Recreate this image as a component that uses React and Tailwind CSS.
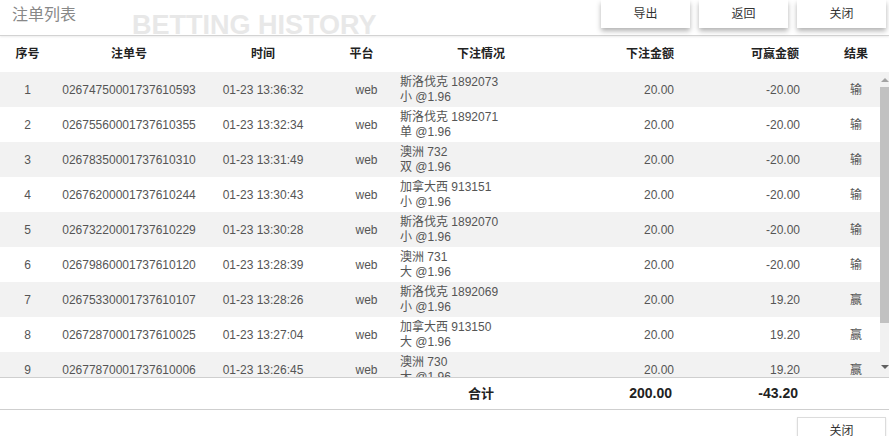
import React from 'react';

const rows = [
  { no: 1, id: '02674750001737610593', time: '01-23 13:36:32', l1: '斯洛伐克 1892073', l2: '小 @1.96', bet: '20.00', win: '-20.00', res: '输' },
  { no: 2, id: '02675560001737610355', time: '01-23 13:32:34', l1: '斯洛伐克 1892071', l2: '单 @1.96', bet: '20.00', win: '-20.00', res: '输' },
  { no: 3, id: '02678350001737610310', time: '01-23 13:31:49', l1: '澳洲 732', l2: '双 @1.96', bet: '20.00', win: '-20.00', res: '输' },
  { no: 4, id: '02676200001737610244', time: '01-23 13:30:43', l1: '加拿大西 913151', l2: '小 @1.96', bet: '20.00', win: '-20.00', res: '输' },
  { no: 5, id: '02673220001737610229', time: '01-23 13:30:28', l1: '斯洛伐克 1892070', l2: '小 @1.96', bet: '20.00', win: '-20.00', res: '输' },
  { no: 6, id: '02679860001737610120', time: '01-23 13:28:39', l1: '澳洲 731', l2: '大 @1.96', bet: '20.00', win: '-20.00', res: '输' },
  { no: 7, id: '02675330001737610107', time: '01-23 13:28:26', l1: '斯洛伐克 1892069', l2: '小 @1.96', bet: '20.00', win: '19.20', res: '赢' },
  { no: 8, id: '02672870001737610025', time: '01-23 13:27:04', l1: '加拿大西 913150', l2: '大 @1.96', bet: '20.00', win: '19.20', res: '赢' },
  { no: 9, id: '02677870001737610006', time: '01-23 13:26:45', l1: '澳洲 730', l2: '大 @1.96', bet: '20.00', win: '19.20', res: '赢' },
];

const TopButton = ({ children }) => (
  <button className="w-[89px] h-[28px] ml-[9px] bg-white text-[12px] text-[#333] shadow-[0_3px_5px_rgba(0,0,0,0.3)]">
    {children}
  </button>
);

const App = () => {
  return (
    <div
      className="w-[889px] h-[436px] overflow-hidden bg-white flex flex-col"
      style={{ fontFamily: '"Liberation Sans", "Noto Sans CJK SC", sans-serif' }}
    >
      {/* Title bar */}
      <div className="h-[36px] shrink-0 flex items-start border-b border-[#d3d3d3] shadow-[0_1px_2px_rgba(0,0,0,0.08)]">
        <div className="w-[132px] pl-[12px] pt-[4px] text-[16px] leading-[22px] text-[#888]">注单列表</div>
        <div className="flex-1 pt-[15px] text-[27px] leading-[20px] font-bold text-[#e8e8e8]">
          BETTING HISTORY
        </div>
        <div className="flex mr-[3px]">
          <TopButton>导出</TopButton>
          <TopButton>返回</TopButton>
          <TopButton>关闭</TopButton>
        </div>
      </div>

      {/* Column header */}
      <div className="h-[36px] shrink-0 flex items-center text-[12px] font-bold text-[#222]">
        <div className="w-[55px] text-center">序号</div>
        <div className="w-[148px] text-center">注单号</div>
        <div className="w-[120px] text-center">时间</div>
        <div className="w-[77px] text-center">平台</div>
        <div className="w-[162px] text-center">下注情况</div>
        <div className="w-[112px] text-right">下注金额</div>
        <div className="w-[149px] text-right pr-[24px]">可赢金额</div>
        <div className="w-[66px] text-center">结果</div>
      </div>

      {/* Body */}
      <div className="h-[305px] shrink-0 flex overflow-hidden">
        <div className="w-[880px] text-[12px] text-[#555]">
          {rows.map((r, i) => (
            <div key={r.no} className={`h-[35px] flex items-center ${i % 2 === 0 ? 'bg-[#f2f2f2]' : 'bg-white'}`}>
              <div className="w-[55px] text-center">{r.no}</div>
              <div className="w-[148px] text-center">{r.id}</div>
              <div className="w-[120px] text-center">{r.time}</div>
              <div className="w-[77px] text-center pl-[10px]">web</div>
              <div className="w-[162px] leading-[15px]">
                <div>{r.l1}</div>
                <div>{r.l2}</div>
              </div>
              <div className="w-[112px] text-right">{r.bet}</div>
              <div className="w-[149px] text-right pr-[23px]">{r.win}</div>
              <div className="w-[57px] text-center pl-[9px]">{r.res}</div>
            </div>
          ))}
        </div>
        {/* Scrollbar */}
        <div className="w-[9px] flex flex-col bg-[#f1f1f1]">
          <div className="h-[15px] flex items-center justify-end">
            <div className="w-0 h-0 border-x-[4px] border-x-transparent border-b-[4px] border-b-[#a3a3a3]" />
          </div>
          <div className="h-[236px] bg-[#c1c1c1]" />
          <div className="flex-1 flex items-end justify-end pb-[8px]">
            <div className="w-0 h-0 border-x-[4px] border-x-transparent border-t-[4px] border-t-[#606060]" />
          </div>
        </div>
      </div>

      {/* Totals */}
      <div className="h-[33px] shrink-0 flex items-center border-y border-[#cfcfcf] font-bold text-[#222]">
        <div className="w-[55px]" />
        <div className="w-[148px]" />
        <div className="w-[120px]" />
        <div className="w-[77px]" />
        <div className="w-[162px] text-center text-[13px]">合计</div>
        <div className="w-[112px] text-right pr-[2px] text-[14px]">200.00</div>
        <div className="w-[149px] text-right pr-[25px] text-[14px]">-43.20</div>
        <div className="w-[66px]" />
      </div>

      {/* Bottom buttons */}
      <div className="flex justify-end pt-[7px] pr-[3px]">
        <button className="w-[89px] h-[28px] bg-white border border-[#dcdcdc] text-[12px] text-[#333] shadow-[0_1px_2px_rgba(0,0,0,0.1)]">
          关闭
        </button>
      </div>
    </div>
  );
};

export default App;
